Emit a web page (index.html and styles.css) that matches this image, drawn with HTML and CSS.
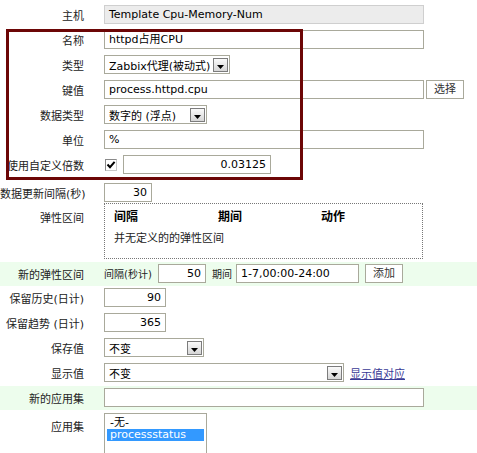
FILE: index.html
```html
<!DOCTYPE html>
<html>
<head>
<meta charset="utf-8">
<link rel="stylesheet" href="styles.css">
</head>
<body>
<div class="page">
  <div class="row">
    <div class="lbl">主机</div>
    <div class="ctl"><div class="inp ro w320">Template Cpu-Memory-Num</div></div>
  </div>
  <div class="row">
    <div class="lbl">名称</div>
    <div class="ctl"><div class="inp w320">httpd占用CPU</div></div>
  </div>
  <div class="row">
    <div class="lbl">类型</div>
    <div class="ctl">
      <div class="sel w126"><span class="txt">Zabbix代理(被动式)</span><span class="arr"><svg width="7" height="4" viewBox="0 0 7 4"><path d="M0 0H7L3.5 4Z" fill="#000"/></svg></span></div>
    </div>
  </div>
  <div class="row">
    <div class="lbl">键值</div>
    <div class="ctl"><div class="inp w320">process.httpd.cpu</div><div class="btn b-sel">选择</div></div>
  </div>
  <div class="row">
    <div class="lbl">数据类型</div>
    <div class="ctl">
      <div class="sel w103"><span class="txt">数字的 (浮点)</span><span class="arr"><svg width="7" height="4" viewBox="0 0 7 4"><path d="M0 0H7L3.5 4Z" fill="#000"/></svg></span></div>
    </div>
  </div>
  <div class="row">
    <div class="lbl">单位</div>
    <div class="ctl"><div class="inp w320">%</div></div>
  </div>
  <div class="row">
    <div class="lbl">使用自定义倍数</div>
    <div class="ctl">
      <span class="chk"><svg width="10" height="10" viewBox="0 0 10 10"><path d="M1.5 4.5L4 7.2L8.6 1.8" stroke="#000" stroke-width="2" fill="none"/></svg></span>
      <div class="inp w148 num">0.03125</div>
    </div>
  </div>
  <div class="row r-delay">
    <div class="lbl">数据更新间隔(秒)</div>
    <div class="ctl"><div class="inp w48 num">30</div></div>
  </div>
  <div class="row r-flex">
    <div class="lbl lbl-top">弹性区间</div>
    <div class="ctl">
      <div class="flexbox">
        <div class="fhead"><span>间隔</span><span>期间</span><span>动作</span></div>
        <div class="fnone">并无定义的的弹性区间</div>
      </div>
    </div>
  </div>
  <div class="row band">
    <div class="lbl">新的弹性区间</div>
    <div class="ctl">
      <span class="txt-in w-int">间隔(秒计)</span>
      <div class="inp w48 num ml6">50</div>
      <span class="txt-in ml6">期间</span>
      <div class="inp w123 ml4">1-7,00:00-24:00</div>
      <div class="btn b-add">添加</div>
    </div>
  </div>
  <div class="row">
    <div class="lbl">保留历史(日计)</div>
    <div class="ctl"><div class="inp w62 num">90</div></div>
  </div>
  <div class="row">
    <div class="lbl">保留趋势 (日计)</div>
    <div class="ctl"><div class="inp w62 num">365</div></div>
  </div>
  <div class="row">
    <div class="lbl">保存值</div>
    <div class="ctl">
      <div class="sel w100"><span class="txt">不变</span><span class="arr"><svg width="7" height="4" viewBox="0 0 7 4"><path d="M0 0H7L3.5 4Z" fill="#000"/></svg></span></div>
    </div>
  </div>
  <div class="row">
    <div class="lbl">显示值</div>
    <div class="ctl">
      <div class="sel w240"><span class="txt">不变</span><span class="arr"><svg width="7" height="4" viewBox="0 0 7 4"><path d="M0 0H7L3.5 4Z" fill="#000"/></svg></span></div>
      <a class="link" href="#">显示值对应</a>
    </div>
  </div>
  <div class="row band">
    <div class="lbl">新的应用集</div>
    <div class="ctl"><div class="inp w320"></div></div>
  </div>
  <div class="row r-list">
    <div class="lbl lbl-top2">应用集</div>
    <div class="ctl">
      <div class="listbox">
        <div class="opt">-无-</div>
        <div class="opt selected">processstatus</div>
      </div>
    </div>
  </div>
</div>
<div class="annot"></div>
</body>
</html>
```

FILE: styles.css
```css
html, body {
  margin: 0;
  padding: 0;
  background: #fff;
}
body {
  font-family: "DejaVu Sans", "Noto Sans CJK SC", sans-serif;
  font-size: 11px;
  color: #222;
  width: 477px;
  height: 453px;
  overflow: hidden;
  position: relative;
}
.page {
  padding-top: 3px;
}
.row {
  display: flex;
  align-items: center;
  padding: 2px 0 4px;
}
.lbl {
  width: 84px;
  flex-shrink: 0;
  text-align: right;
  white-space: nowrap;
  color: #222;
}
.ctl {
  margin-left: 20px;
  display: flex;
  align-items: center;
}
.inp {
  box-sizing: border-box;
  height: 19px;
  border: 1px solid #a9a99b;
  background: #fff;
  color: #000;
  padding: 0 4px;
  line-height: 17px;
  white-space: nowrap;
  overflow: hidden;
}
.inp.ro {
  background: #ececec;
  border-color: #cfcfcf;
}
.inp.num {
  text-align: right;
}
.w320 { width: 320px; }
.w148 { width: 148px; }
.w123 { width: 123px; }
.w62 { width: 62px; }
.w48 { width: 48px; }
.w126 { width: 126px; }
.w103 { width: 103px; }
.w100 { width: 100px; }
.w240 { width: 240px; }
.ml4 { margin-left: 4px; }
.ml6 { margin-left: 6px; }

.sel {
  box-sizing: border-box;
  height: 19px;
  border: 1px solid #a9a99b;
  background: #fff;
  color: #000;
  display: flex;
  align-items: center;
  padding: 0 1px 0 4px;
}
.sel .txt {
  flex: 1;
  white-space: nowrap;
}
.arr {
  box-sizing: border-box;
  width: 15px;
  height: 14px;
  border: 1px solid #7c7c7c;
  background: linear-gradient(#fafafa, #d6d6d6);
  display: flex;
  align-items: flex-end;
  justify-content: center;
  padding-bottom: 2px;
  margin-top: 1px;
}
.arr svg {
  display: block;
}
.btn {
  box-sizing: border-box;
  height: 19px;
  width: 38px;
  border: 1px solid #a9a99b;
  background: #fff;
  color: #333;
  text-align: center;
  line-height: 17px;
}
.b-sel { margin-left: 2px; }
.b-add { margin-left: 6px; }
.chk {
  box-sizing: border-box;
  width: 12px;
  height: 12px;
  border: 1px solid #8a8a8a;
  border-right-color: #c8c8c8;
  border-bottom-color: #c8c8c8;
  background: #fff;
  display: flex;
  align-items: center;
  justify-content: center;
  margin-left: 1px;
  margin-right: 6px;
}
.chk svg { display: block; }
.r-delay {
  margin-top: 3px;
  padding-bottom: 0;
}
.r-flex {
  align-items: flex-start;
  padding: 1px 0 3px;
}
.lbl-top {
  padding-top: 6px;
}
.flexbox {
  box-sizing: border-box;
  width: 319px;
  height: 56px;
  border: 1px dotted #777;
  padding: 5px 9px 0;
}
.fhead {
  display: grid;
  grid-template-columns: 104px 103px auto;
  font-weight: bold;
  font-size: 12px;
  line-height: 16px;
  color: #000;
}
.fnone {
  margin-top: 7px;
  line-height: 14px;
  color: #222;
}
.band {
  background: #edfded;
  padding: 2px 0 3px;
}
.txt-in {
  white-space: nowrap;
  font-size: 10px;
  color: #222;
}
.w-int {
  width: 48px;
}
.link {
  margin-left: 6px;
  color: #3a3a96;
  text-decoration: underline;
}
.r-list {
  align-items: flex-start;
  padding: 3px 0 0;
}
.lbl-top2 {
  padding-top: 5px;
}
.listbox {
  box-sizing: border-box;
  width: 103px;
  height: 40px;
  border: 1px solid #a9a99b;
  border-bottom: 0;
  padding: 3px 2px 0;
  color: #000;
}
.opt {
  line-height: 12px;
  padding-left: 3px;
  white-space: nowrap;
}
.opt.selected {
  background: #3399ff;
  color: #fff;
}
.annot {
  position: absolute;
  left: 6px;
  top: 29px;
  width: 297px;
  height: 151px;
  box-sizing: border-box;
  border: 3px solid #6c0606;
  pointer-events: none;
}
```
